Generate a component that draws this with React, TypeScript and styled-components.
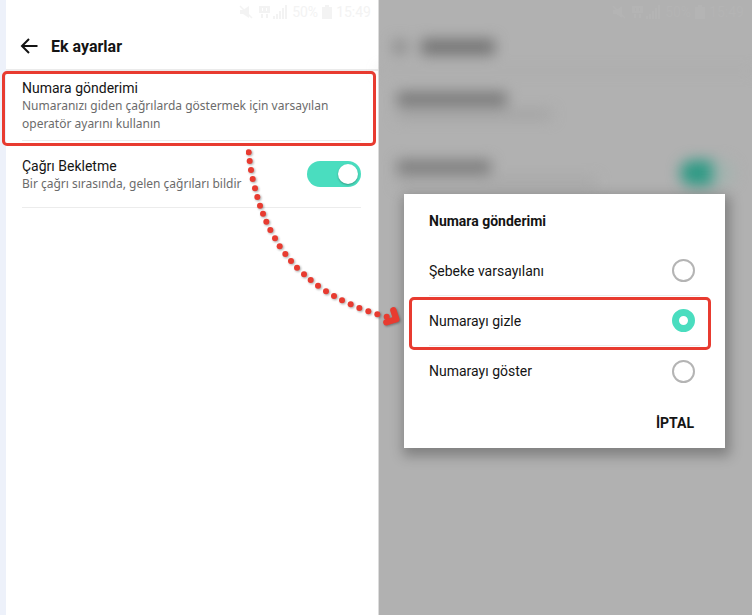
import React from "react";
import styled, { createGlobalStyle } from "styled-components";

const red = "#e83b30";
const mint = "#4addbf";

const GlobalStyle = createGlobalStyle`
  * { box-sizing: border-box; }
  body {
    margin: 0;
    background: #edf1fa;
    color: #141414;
    font-family: Roboto, sans-serif;
  }
  h1, h2, p { margin: 0; }
  button, input { font: inherit; margin: 0; }
`;

const Page = styled.main`
  position: relative;
  display: grid;
  grid-template-columns: 1fr 1fr;
  min-height: 100vh;
  padding-left: 6px;
`;

const Screen = styled.section<{ $dim?: boolean }>`
  position: relative;
  min-width: 0;
  background: ${(p) => (p.$dim ? "#b1b1b1" : "#fff")};
  box-shadow: ${(p) => (p.$dim ? "-1px 0 0 #dcdcdc" : "none")};
`;

const StatusBar = styled.div<{ $dim?: boolean }>`
  display: flex;
  align-items: center;
  justify-content: flex-end;
  gap: 4px;
  height: 24px;
  padding-right: 8px;
  color: ${(p) => (p.$dim ? "#b4b4b4" : "#f3f3f3")};
  font-size: 14px;
  line-height: 24px;
`;

const Header = styled.header`
  display: flex;
  align-items: center;
  gap: 13px;
  height: 47px;
  padding: 0 14px;
  border-bottom: 2px solid #ebebeb;
`;

const BackButton = styled.button`
  display: flex;
  padding: 0;
  border: 0;
  background: none;
  color: inherit;
`;

const ScreenTitle = styled.h1`
  font-size: 16px;
  line-height: 24px;
  font-weight: 700;
`;

const Item = styled.div<{ $tall?: boolean }>`
  position: relative;
  display: flex;
  align-items: ${(p) => (p.$tall ? "flex-start" : "center")};
  justify-content: space-between;
  gap: 12px;
  height: ${(p) => (p.$tall ? 70 : 67)}px;
  margin: 0 18px 0 16px;
  padding-top: ${(p) => (p.$tall ? 8 : 0)}px;
  border-bottom: 1px solid #ececec;
`;

const ItemTitle = styled.h2`
  font-size: 14px;
  line-height: 18px;
  font-weight: 400;
`;

const ItemText = styled.p`
  color: #6b6b6b;
  font-family: "Noto Sans", sans-serif;
  font-size: 12px;
  line-height: 18px;
`;

const Highlight = styled.span<{ $row?: boolean }>`
  position: absolute;
  inset: ${(p) => (p.$row ? "1px -11px -5px -20px" : "0 -15px -6px -20px")};
  border: 3px solid ${red};
  border-radius: 5px;
  pointer-events: none;
`;

const Switch = styled.input`
  appearance: none;
  flex: none;
  display: flex;
  align-items: center;
  justify-content: flex-end;
  width: 54px;
  height: 26px;
  padding: 3px;
  border-radius: 13px;
  background: ${mint};
  &::before {
    content: "";
    width: 20px;
    height: 20px;
    border-radius: 50%;
    background: #fff;
    box-shadow: 0 1px 2px rgba(0, 0, 0, 0.3);
  }
`;

const Trail = styled.svg`
  position: absolute;
  z-index: 3;
  left: 246px;
  top: 149px;
  width: 156px;
  height: 180px;
  pointer-events: none;
  filter: drop-shadow(1px 1px 1px rgba(0, 0, 0, 0.35));
`;

const Backdrop = styled.div`
  filter: blur(7px);
  pointer-events: none;
`;

const FaintBar = styled.div<{ $w: number; $h: number; $c: string }>`
  width: ${(p) => p.$w}px;
  height: ${(p) => p.$h}px;
  border-radius: 3px;
  background: ${(p) => p.$c};
`;

const FaintHeader = styled.div`
  display: flex;
  align-items: center;
  gap: 14px;
  height: 48px;
  padding: 0 14px;
  border-bottom: 2px solid #a8a8a8;
`;

const FaintRow = styled.div`
  display: flex;
  align-items: center;
  justify-content: space-between;
  height: 67px;
  padding: 0 18px 0 18px;
`;

const FaintLines = styled.div`
  display: grid;
  gap: 4px;
`;

const FaintSwitch = styled.div`
  width: 54px;
  height: 26px;
  border-radius: 13px;
  background: linear-gradient(90deg, #2f9a85 55%, #a4b3af 65%);
`;

const Dialog = styled.form`
  position: absolute;
  z-index: 1;
  top: 194px;
  left: 25px;
  right: 27px;
  padding: 0 25px;
  background: #fff;
  box-shadow: 2px 5px 12px 3px rgba(0, 0, 0, 0.28);
`;

const DialogTitle = styled.h2`
  padding: 17px 0 14px;
  font-size: 14px;
  line-height: 21px;
  font-weight: 700;
`;

const Option = styled.label`
  position: relative;
  display: flex;
  align-items: center;
  justify-content: space-between;
  height: 50px;
  padding-right: 5px;
  font-size: 14px;
  &:not(:last-of-type) { border-bottom: 1px solid #ececec; }
`;

const Radio = styled.input`
  appearance: none;
  width: 23px;
  height: 23px;
  border: 2px solid #b4b4b4;
  border-radius: 50%;
  background: #fff;
  &:checked { border: 7px solid ${mint}; }
`;

const Footer = styled.div`
  display: flex;
  justify-content: flex-end;
  padding: 16px 6px 14px 0;
`;

const CancelButton = styled.button`
  padding: 0;
  border: 0;
  background: none;
  color: #141414;
  font-size: 14px;
  line-height: 22px;
  font-weight: 700;
`;

const dots = [
  [146, 67], [149, 93], [153, 120], [158, 147], [165, 175], [172, 201], [180, 227],
  [189, 251], [199, 275], [211, 300], [225, 325], [239, 349], [256, 372], [273, 393],
  [291, 413], [312, 433], [332, 450], [354, 467], [378, 484], [402, 498], [426, 511],
  [452, 523], [478, 534], [505, 544], [532, 553], [560, 560],
];

const BackIcon = () => (
  <svg width="18" height="18" viewBox="0 0 18 18" fill="none" stroke="currentColor" strokeWidth="2">
    <path d="M9 1 2 8l7 7M2 8h15.500" />
  </svg>
);

function Status({ dim }: { dim?: boolean }) {
  return (
    <StatusBar $dim={dim}>
      <svg width="49" height="16" viewBox="0 0 49 16" fill="currentColor" aria-hidden="true">
        <path d="M1 6h3l6-4v12l-6-4H1z" />
        <path d="M1 2l12 12" stroke="currentColor" strokeWidth="1.500" />
        <path fillRule="evenodd" d="M20 2h11v7H20zM23 4v3h1V4zM27 4v3h1V4z" />
        <path d="M22 10h2v4h-2zM27 10h2v4h-2z" />
        <path d="M34 12h2v3h-2zM37 10h2v5h-2zM40 7h2v8h-2zM43 4h2v11h-2zM46 1h2v14h-2z" />
      </svg>
      <span>50%</span>
      <svg width="10" height="14" viewBox="0 0 10 14" fill="currentColor" aria-hidden="true">
        <path d="M3 0h4v2h3v12H0V2h3z" />
      </svg>
      <span>15:49</span>
    </StatusBar>
  );
}

export default function App() {
  return (
    <>
      <GlobalStyle />
      <Page>
        <Screen>
          <Status />
          <Header>
            <BackButton type="button" aria-label="Geri"><BackIcon /></BackButton>
            <ScreenTitle>Ek ayarlar</ScreenTitle>
          </Header>
          <Item $tall>
            <div>
              <ItemTitle>Numara gönderimi</ItemTitle>
              <ItemText>Numaranızı giden çağrılarda göstermek için varsayılan operatör ayarını kullanın</ItemText>
            </div>
            <Highlight />
          </Item>
          <Item>
            <div>
              <ItemTitle as="label" htmlFor="waiting">Çağrı Bekletme</ItemTitle>
              <ItemText>Bir çağrı sırasında, gelen çağrıları bildir</ItemText>
            </div>
            <Switch id="waiting" type="checkbox" role="switch" defaultChecked />
          </Item>
        </Screen>

        <Screen $dim>
          <Status dim />
          <Backdrop aria-hidden="true">
            <FaintHeader>
              <FaintBar $w={14} $h={14} $c="#8c8c8c" />
              <FaintBar $w={74} $h={16} $c="#747474" />
            </FaintHeader>
            <FaintRow>
              <FaintLines>
                <FaintBar $w={110} $h={14} $c="#787878" />
                <FaintBar $w={155} $h={9} $c="#a2a2a2" />
              </FaintLines>
            </FaintRow>
            <FaintRow>
              <FaintLines>
                <FaintBar $w={94} $h={14} $c="#7c7c7c" />
                <FaintBar $w={200} $h={8} $c="#a6a6a6" />
              </FaintLines>
              <FaintSwitch />
            </FaintRow>
          </Backdrop>
          <Dialog role="dialog" aria-labelledby="dialog-title">
            <DialogTitle id="dialog-title">Numara gönderimi</DialogTitle>
            <Option>Şebeke varsayılanı<Radio type="radio" name="caller" /></Option>
            <Option>Numarayı gizle<Radio type="radio" name="caller" defaultChecked /><Highlight $row /></Option>
            <Option>Numarayı göster<Radio type="radio" name="caller" /></Option>
            <Footer><CancelButton type="button">İPTAL</CancelButton></Footer>
          </Dialog>
        </Screen>

        <Trail viewBox="138 57 468 540" fill={red} aria-hidden="true">
          {dots.map(([x, y]) => <circle key={x} cx={x} cy={y} r="9" />)}
          <path d="M580 541 589 568 559 577" fill="none" stroke={red} strokeWidth="19" strokeLinecap="round" strokeLinejoin="round" />
        </Trail>
      </Page>
    </>
  );
}
